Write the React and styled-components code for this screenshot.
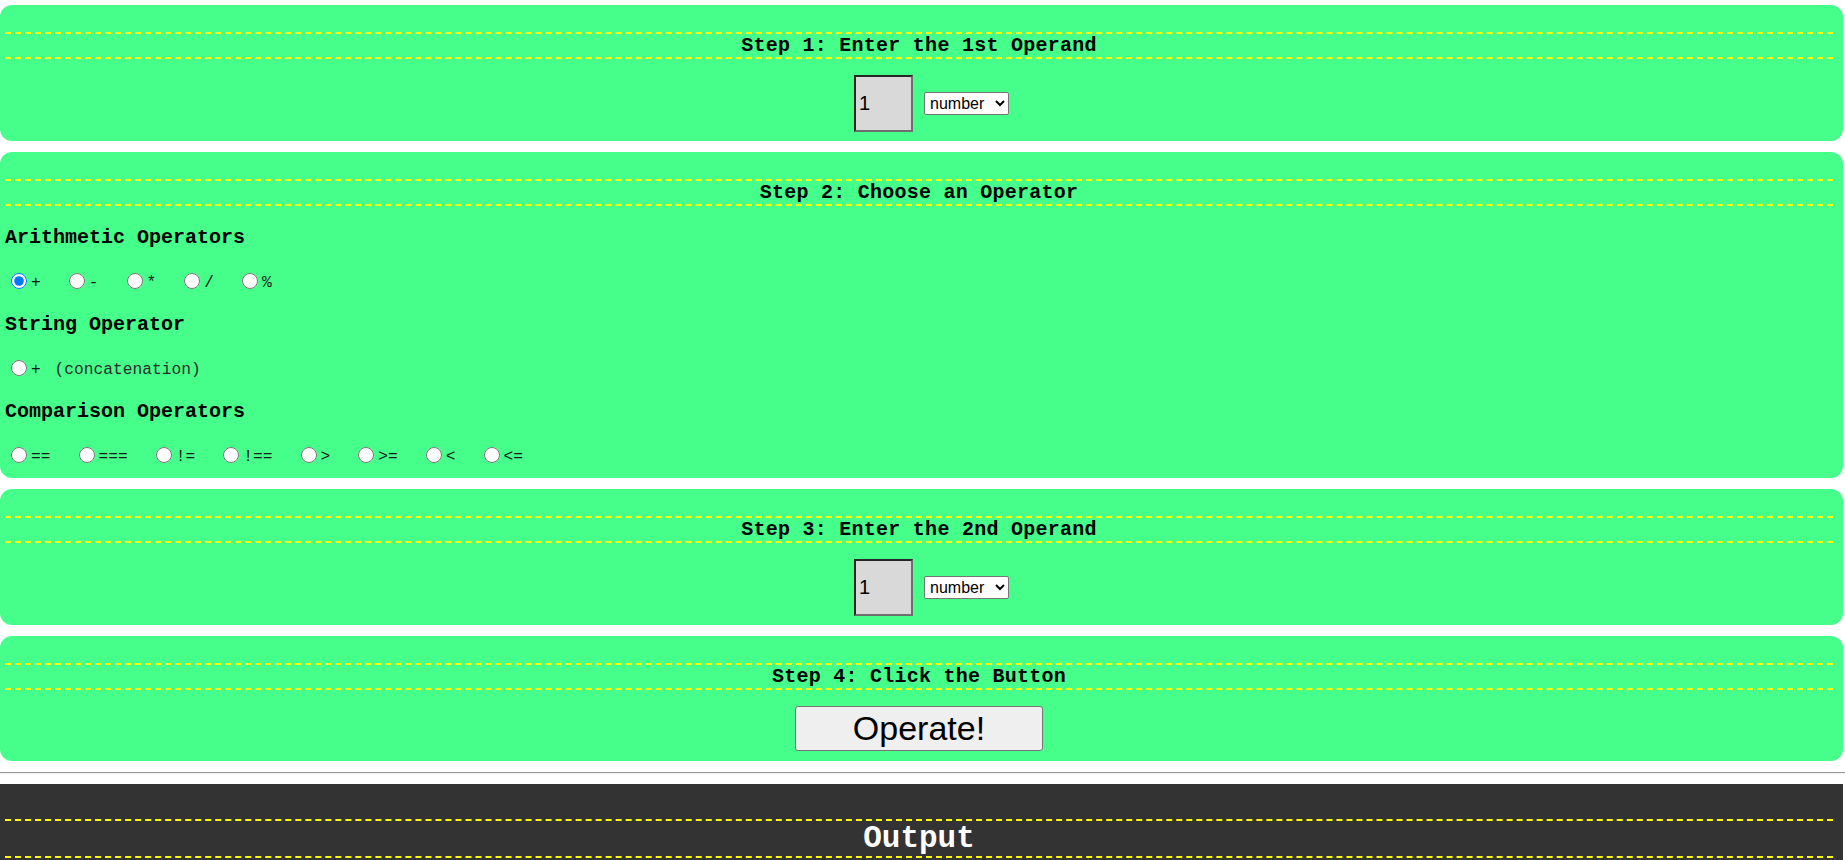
import React, { useState } from "react";
import styled, { createGlobalStyle } from "styled-components";

const green = "#45ff8a";
const dashed = "2px dashed #ffff00";

const GlobalStyle = createGlobalStyle`
    html, body {
        margin: 0;
        padding: 0;
        background: #fff;
        font-family: "Liberation Mono", "Courier New", monospace;
        color: #000;
    }
`;

const Page = styled.div`
    padding-top: 5px;
`;

const Panel = styled.section`
    background: ${green};
    border-radius: 12px;
    margin: 0 2px 11px 0;
    padding: 27px 10px ${({ bottom }) => bottom || 9}px 5px;
`;

const StepTitle = styled.h2`
    margin: 0;
    border-top: ${dashed};
    border-bottom: ${dashed};
    font-size: ${({ big }) => (big ? 31 : 20)}px;
    line-height: ${({ big }) => (big ? 35 : 23)}px;
    letter-spacing: ${({ big }) => (big ? 0 : 0.25)}px;
    font-weight: bold;
    text-align: center;
    color: ${({ light }) => (light ? "#fff" : "#000")};
`;

const OperandRow = styled.div`
    display: flex;
    align-items: center;
    justify-content: center;
    gap: 11px;
    margin-top: 16px;
    padding-left: 25px;
`;

const NumberBox = styled.input`
    box-sizing: border-box;
    width: 59px;
    height: 57px;
    margin: 0;
    padding: 0 3px;
    background: #d9d9d9;
    border-style: solid;
    border-width: 2px;
    border-color: #262626 #6e6e6e #6e6e6e #262626;
    font-family: "Liberation Sans", Arial, sans-serif;
    font-size: 20px;
    color: #000;
`;

const TypeSelect = styled.select`
    box-sizing: border-box;
    width: 85px;
    height: 23px;
    margin: 0;
    padding: 0 1px;
    background: #fff;
    border: 1px solid #767676;
    border-radius: 2px;
    font-family: "Liberation Sans", Arial, sans-serif;
    font-size: 16px;
    color: #000;
`;

const GroupTitle = styled.h4`
    margin: ${({ first }) => (first ? 20 : 21)}px 0 0;
    font-size: 20px;
    line-height: 23px;
    font-weight: bold;
`;

const RadioRow = styled.div`
    display: flex;
    align-items: center;
    height: 22px;
    margin-top: 21px;
`;

const Option = styled.label`
    display: inline-flex;
    align-items: center;
    margin-right: 22px;
    font-size: 16.25px;
    color: #1a1a1a;
    white-space: pre;
`;

const OptionText = styled.span`
    padding-top: 3px;
`;

const Note = styled.span`
    margin-left: 4px;
    color: #2b2b2b;
`;

const Radio = styled.input`
    width: 16px;
    height: 16px;
    margin: 0 4px 0 6px;
`;

const ButtonRow = styled.div`
    display: flex;
    justify-content: center;
    margin-top: 16px;
`;

const OperateButton = styled.button`
    box-sizing: border-box;
    width: 248px;
    height: 45px;
    padding: 0;
    background: #efefef;
    border: 1px solid #767676;
    border-radius: 3px;
    font-family: "Liberation Sans", Arial, sans-serif;
    font-size: 34px;
    line-height: 43px;
    color: #000;
`;

const Divider = styled.hr`
    margin: 0 0 10px;
    border: none;
    border-top: 1px solid #9a9a9a;
    border-bottom: 1px solid #eeeeee;
`;

const OutputPanel = styled.section`
    background: #333;
    margin-right: 2px;
    padding: 35px 10px 40px 5px;
    min-height: 60px;
`;

const arithmetic = ["+", "-", "*", "/", "%"];
const comparison = ["==", "===", "!=", "!==", ">", ">=", "<", "<="];

const Operand = ({ value, onChange }) => (
    <OperandRow>
        <NumberBox value={value} onChange={(e) => onChange(e.target.value)} />
        <TypeSelect defaultValue="number">
            <option value="number">number</option>
            <option value="string">string</option>
        </TypeSelect>
    </OperandRow>
);

const App = () => {
    const [first, setFirst] = useState("1");
    const [second, setSecond] = useState("1");
    const [operator, setOperator] = useState("a+");

    const renderOption = (key, text, note) => (
        <Option key={key}>
            <Radio
                type="radio"
                name="operator"
                checked={operator === key}
                onChange={() => setOperator(key)}
            />
            <OptionText>
                {text}
                {note && <Note> {note}</Note>}
            </OptionText>
        </Option>
    );

    return (
        <Page>
            <GlobalStyle />
            <Panel>
                <StepTitle>Step 1: Enter the 1st Operand</StepTitle>
                <Operand value={first} onChange={setFirst} />
            </Panel>

            <Panel bottom={12}>
                <StepTitle>Step 2: Choose an Operator</StepTitle>
                <GroupTitle first>Arithmetic Operators</GroupTitle>
                <RadioRow>{arithmetic.map((op) => renderOption("a" + op, op))}</RadioRow>
                <GroupTitle>String Operator</GroupTitle>
                <RadioRow>{renderOption("s+", "+", "(concatenation)")}</RadioRow>
                <GroupTitle>Comparison Operators</GroupTitle>
                <RadioRow>{comparison.map((op) => renderOption("c" + op, op))}</RadioRow>
            </Panel>

            <Panel>
                <StepTitle>Step 3: Enter the 2nd Operand</StepTitle>
                <Operand value={second} onChange={setSecond} />
            </Panel>

            <Panel bottom={10}>
                <StepTitle>Step 4: Click the Button</StepTitle>
                <ButtonRow>
                    <OperateButton>Operate!</OperateButton>
                </ButtonRow>
            </Panel>

            <Divider />

            <OutputPanel>
                <StepTitle big light>Output</StepTitle>
            </OutputPanel>
        </Page>
    );
};

export default App;
